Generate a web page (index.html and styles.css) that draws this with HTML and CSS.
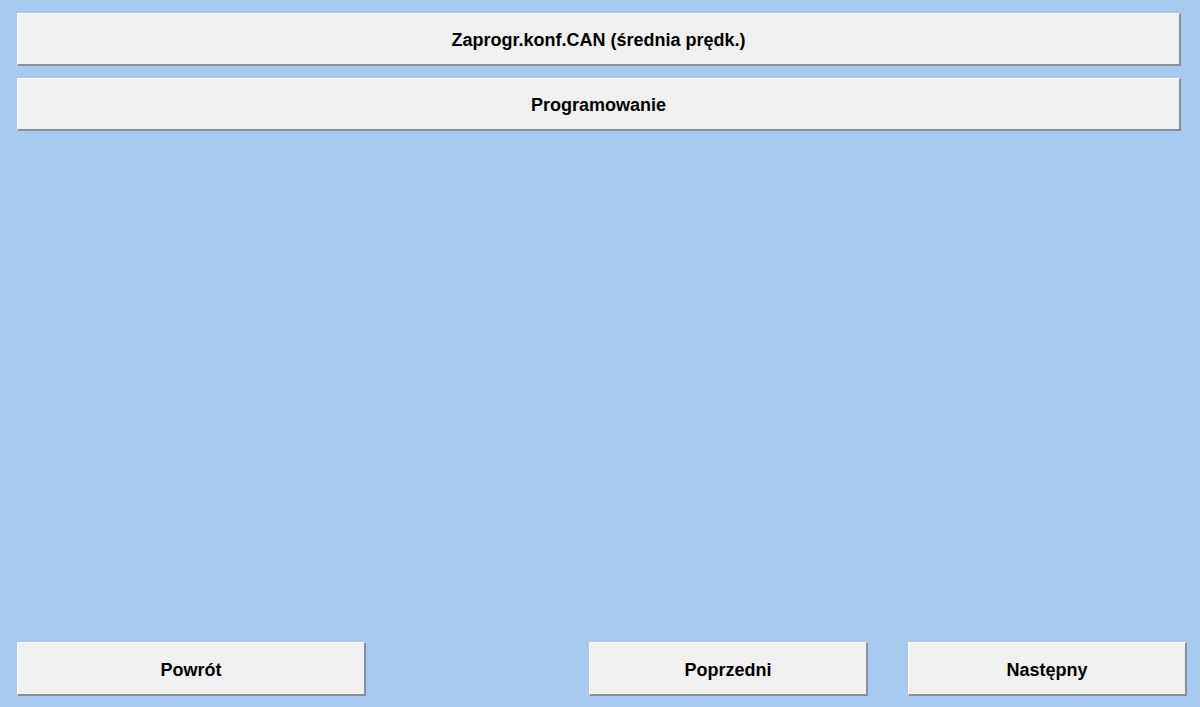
FILE: index.html
```html
<!DOCTYPE html>
<html lang="pl">
    <head>
        <meta charset="utf-8">
        <title>Programowanie</title>
        <link rel="stylesheet" href="styles.css">
    </head>
    <body>
        <div class="screen">
            <div class="menu">
                <button class="btn btn-wide">Zaprogr.konf.CAN (średnia prędk.)</button>
                <button class="btn btn-wide">Programowanie</button>
            </div>
            <div class="nav">
                <button class="btn btn-back">Powrót</button>
                <button class="btn btn-step">Poprzedni</button>
                <button class="btn btn-step">Następny</button>
            </div>
        </div>
    </body>
</html>
```
FILE: styles.css
```css
*{
    box-sizing: border-box;
}

html, body{
    margin: 0;
    height: 100%;
}

body{
    background-color: #a6caf0;
    font-family: "Liberation Sans", Arial, sans-serif;
}

.screen{
    height: 100%;
    display: flex;
    flex-direction: column;
    padding: 13px 13px 11px 17px;
}

.menu{
    display: flex;
    flex-direction: column;
    gap: 12px;
    width: 1164px;
}

.btn{
    font-family: inherit;
    font-size: 18px;
    font-weight: bold;
    color: #000;
    background-color: #f0f0f0;
    border-style: solid;
    border-width: 1px 2px 2px 1px;
    border-color: #fcfcfc #8c9096 #8c9096 #fcfcfc;
    padding: 3px 0 0;
    height: 53px;
    cursor: pointer;
}

.btn-wide{
    width: 100%;
}

.nav{
    margin-top: auto;
    display: flex;
    gap: 40px;
}

.btn-back{
    width: 349px;
    height: 54px;
    margin-right: auto;
}

.btn-step{
    width: 279px;
    height: 54px;
}
```
